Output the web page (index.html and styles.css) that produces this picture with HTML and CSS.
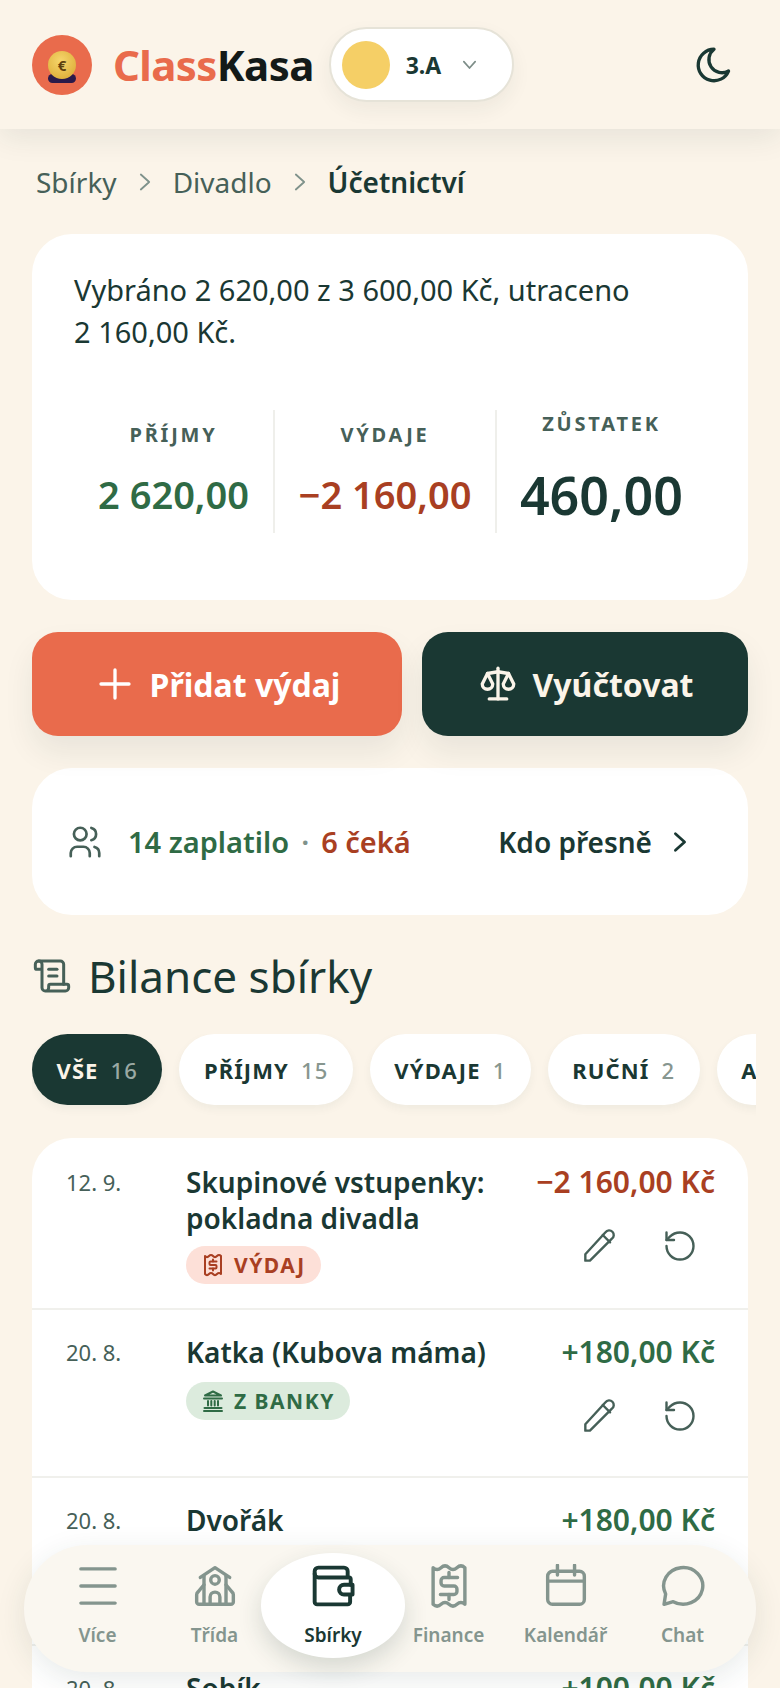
FILE: index.html
```html
<!DOCTYPE html>
<html lang="cs">
<head>
<meta charset="utf-8">
<title>ClassKasa</title>
<link rel="stylesheet" href="styles.css">
</head>
<body>
<svg class="defs" width="0" height="0" aria-hidden="true">
  <symbol id="pencil" viewBox="0 0 24 24"><path d="M4 20h2.500L18.500 8a2.500 2.500 0 1 0-3.500-3.500L4 16.500z"/><path d="M13.500 6l4 4"/></symbol>
  <symbol id="undo" viewBox="0 0 24 24"><path d="M3 12a9 9 0 1 0 9-9 9.750 9.750 0 0 0-6.740 2.740L3 8"/><path d="M3 3v5h5"/></symbol>
  <symbol id="bank" viewBox="0 0 24 24"><path d="M3 22h18"/><path d="M3.500 19h17"/><path d="M3 9.500h18"/><path d="M4 6.500L12 2.500l8 4z"/><path d="M7 12v4.500M10.300 12v4.500M13.700 12v4.500M17 12v4.500"/></symbol>
  <symbol id="receipt" viewBox="0 0 24 24"><path d="M4 3c1.300 1.500 2.700 1.500 4 0s2.700-1.500 4 0 2.700 1.500 4 0 2.700-1.500 4 0v18c-1.300-1.500-2.700-1.500-4 0s-2.700 1.500-4 0-2.700-1.500-4 0-2.700 1.500-4 0z"/><path d="M15.500 8.500h-6a1 1 0 0 0-1 1v1.500a1 1 0 0 0 1 1h5a1 1 0 0 1 1 1v1.500a1 1 0 0 1-1 1h-6"/><path d="M12 6.500v2M12 15.500v2"/></symbol>
</svg>

<header class="topbar">
  <div class="logo">
    <span class="logo-base"></span>
    <span class="logo-coin">€</span>
  </div>
  <div class="brand"><span class="brand-a">Class</span>Kasa</div>
  <div class="class-pill">
    <span class="class-dot"></span>
    <span class="class-name">3.A</span>
    <svg class="class-chev" viewBox="0 0 24 24"><path d="M4 8l8 9 8-9"/></svg>
  </div>
  <button class="moon" aria-label="Tmavý režim">
    <svg viewBox="0 0 24 24"><path d="M12 3a7.500 7.500 0 0 0 8.300 12.450A9 9 0 1 1 12 3z"/></svg>
  </button>
</header>

<main class="page">
  <nav class="crumbs">
    <span>Sbírky</span>
    <svg viewBox="0 0 24 24"><path d="M7 3l10 9-10 9"/></svg>
    <span>Divadlo</span>
    <svg viewBox="0 0 24 24"><path d="M7 3l10 9-10 9"/></svg>
    <strong>Účetnictví</strong>
  </nav>

  <section class="card summary">
    <p class="summary-text">Vybráno 2 620,00 z 3 600,00 Kč, utraceno<br>2 160,00 Kč.</p>
    <div class="stats">
      <div class="stat">
        <div class="stat-label">PŘÍJMY</div>
        <div class="stat-value plus">2 620,00</div>
      </div>
      <div class="stat">
        <div class="stat-label">VÝDAJE</div>
        <div class="stat-value minus">−2 160,00</div>
      </div>
      <div class="stat">
        <div class="stat-label">ZŮSTATEK</div>
        <div class="stat-value big">460,00</div>
      </div>
    </div>
  </section>

  <div class="actions">
    <button class="btn btn-coral">
      <svg viewBox="0 0 24 24"><path d="M12 4v16M4 12h16"/></svg>Přidat výdaj
    </button>
    <button class="btn btn-dark">
      <svg viewBox="0 0 24 24"><path d="M7 20.500h10"/><path d="M6 6l6-1 6 1"/><path d="M12 3v17.500"/><path d="M9 12L6 6l-3 6a3 3 0 0 0 6 0z"/><path d="M21 12l-3-6-3 6a3 3 0 0 0 6 0z"/></svg>Vyúčtovat
    </button>
  </div>

  <section class="card who">
    <svg class="who-icon" viewBox="0 0 24 24"><circle cx="9" cy="7" r="4"/><path d="M3 21v-2a4 4 0 0 1 4-4h4a4 4 0 0 1 4 4v2"/><path d="M16 3.130a4 4 0 0 1 0 7.750"/><path d="M21 21v-2a4 4 0 0 0-3-3.850"/></svg>
    <span class="plus">14 zaplatilo</span>
    <span class="who-dot">·</span>
    <span class="minus">6 čeká</span>
    <span class="who-link">Kdo přesně</span>
    <svg class="who-chev" viewBox="0 0 24 24"><path d="M7 3l10 9-10 9"/></svg>
  </section>

  <h2 class="title">
    <svg viewBox="0 0 24 24"><path d="M15 12h-5"/><path d="M15 8h-5"/><path d="M19 17V5a2 2 0 0 0-2-2H4"/><path d="M8 21h12a2 2 0 0 0 2-2v-1a1 1 0 0 0-1-1H11a1 1 0 0 0-1 1v1a2 2 0 1 1-4 0V5a2 2 0 1 0-4 0v2a1 1 0 0 0 1 1h3"/></svg>
    Bilance sbírky
  </h2>

  <div class="chips">
    <span class="chip chip-on">VŠE <em>16</em></span>
    <span class="chip">PŘÍJMY <em>15</em></span>
    <span class="chip">VÝDAJE <em>1</em></span>
    <span class="chip">RUČNÍ <em>2</em></span>
    <span class="chip">AUTOMATICKÉ <em>13</em></span>
  </div>

  <section class="card list">
    <article class="row row-first">
      <div class="row-date">12. 9.</div>
      <div class="row-main">
        <div class="row-title">Skupinové vstupenky: pokladna divadla</div>
        <span class="badge badge-red"><svg viewBox="0 0 24 24"><use href="#receipt"/></svg>VÝDAJ</span>
      </div>
      <div class="row-side">
        <div class="row-amount minus">−2 160,00 Kč</div>
        <div class="row-tools">
          <svg class="tool-pencil" viewBox="0 0 24 24"><use href="#pencil"/></svg>
          <svg class="tool-undo" viewBox="0 0 24 24"><use href="#undo"/></svg>
        </div>
      </div>
    </article>
    <article class="row">
      <div class="row-date">20. 8.</div>
      <div class="row-main">
        <div class="row-title">Katka (Kubova máma)</div>
        <span class="badge badge-green"><svg viewBox="0 0 24 24"><use href="#bank"/></svg>Z BANKY</span>
      </div>
      <div class="row-side">
        <div class="row-amount plus">+180,00 Kč</div>
        <div class="row-tools">
          <svg class="tool-pencil" viewBox="0 0 24 24"><use href="#pencil"/></svg>
          <svg class="tool-undo" viewBox="0 0 24 24"><use href="#undo"/></svg>
        </div>
      </div>
    </article>
    <article class="row">
      <div class="row-date">20. 8.</div>
      <div class="row-main">
        <div class="row-title">Dvořák</div>
        <span class="badge badge-green"><svg viewBox="0 0 24 24"><use href="#bank"/></svg>Z BANKY</span>
      </div>
      <div class="row-side">
        <div class="row-amount plus">+180,00 Kč</div>
        <div class="row-tools">
          <svg class="tool-pencil" viewBox="0 0 24 24"><use href="#pencil"/></svg>
          <svg class="tool-undo" viewBox="0 0 24 24"><use href="#undo"/></svg>
        </div>
      </div>
    </article>
    <article class="row">
      <div class="row-date">20. 8.</div>
      <div class="row-main">
        <div class="row-title">Sobík</div>
      </div>
      <div class="row-side">
        <div class="row-amount plus">+100,00 Kč</div>
      </div>
    </article>
  </section>
</main>

<nav class="tabbar">
  <div class="tab">
    <svg viewBox="0 0 36 36"><path d="M4 4h28M4 18h28M4 32h28"/></svg>
    <span>Více</span>
  </div>
  <div class="tab">
    <svg viewBox="0 0 36 36"><path d="M6 11L18 3l12 8"/><path d="M9 10v23"/><path d="M27 10v23"/><circle cx="18" cy="13" r="3.500"/><path d="M14 33v-6a4 4 0 0 1 8 0v6"/><path d="M9 17l-5 6a3 3 0 0 0-1 2v6a2 2 0 0 0 2 2h26a2 2 0 0 0 2-2v-6a3 3 0 0 0-1-2l-5-6"/></svg>
    <span>Třída</span>
  </div>
  <div class="tab tab-on">
    <svg viewBox="0 0 36 36"><path d="M30 10V6a3 3 0 0 0-3-3H6a3 3 0 0 0-3 3v25a2 2 0 0 0 2 2h25a2 2 0 0 0 2-2v-5"/><path d="M3 8a3 3 0 0 0 3 3h25a1.500 1.500 0 0 1 1.500 1.500V17"/><path d="M34 17h-7a3.500 3.500 0 0 0 0 8h7z"/></svg>
    <span>Sbírky</span>
  </div>
  <div class="tab">
    <svg viewBox="0 0 36 36"><path d="M5 3c2.170 2 4.330 2 6.500 0s4.330-2 6.500 0 4.330 2 6.500 0 4.330-2 6.500 0v30c-2.170-2-4.330-2-6.500 0s-4.330 2-6.500 0-4.330-2-6.500 0-4.330 2-6.500 0z"/><path d="M25 11H14a2.500 2.500 0 0 0-2.500 2.500v2A2.500 2.500 0 0 0 14 18h8a2.500 2.500 0 0 1 2.500 2.500v2A2.500 2.500 0 0 1 22 25H11"/><path d="M18 7v4M18 25v4"/></svg>
    <span>Finance</span>
  </div>
  <div class="tab">
    <svg viewBox="0 0 36 36"><rect x="3" y="6" width="30" height="27" rx="4"/><path d="M3 14h30"/><path d="M11 1v8M25 1v8"/></svg>
    <span>Kalendář</span>
  </div>
  <div class="tab">
    <svg viewBox="0 0 36 36"><path d="M10 30.800A16 15 0 1 0 3.800 24.500L2.500 33z"/></svg>
    <span>Chat</span>
  </div>
</nav>
</body>
</html>
```

FILE: styles.css
```css
* { box-sizing: border-box; }
html, body { margin: 0; height: 1688px; overflow: hidden; }
body {
  background: #fbf4e9;
  color: #1a3833;
  font-family: "Noto Sans", sans-serif;
  position: relative;
}
svg { fill: none; stroke: currentColor; stroke-linecap: round; stroke-linejoin: round; flex: none; display: block; }
.defs { position: absolute; }
button { font: inherit; border: 0; padding: 0; background: none; color: inherit; }

/* header */
.topbar {
  height: 129px;
  padding: 0 32px;
  display: flex;
  align-items: center;
  background: #fbf4e9;
  box-shadow: 0 8px 28px rgba(26, 56, 51, .09);
  position: relative;
}
.logo {
  width: 60px; height: 60px;
  border-radius: 50%;
  background: #e96b4c;
  position: relative;
  flex: none;
}
.logo-coin {
  position: absolute; left: 16px; top: 16px;
  width: 28px; height: 28px;
  border-radius: 50%;
  background: radial-gradient(circle at 45% 35%, #f6d66c, #d8a52e);
  color: #5d3f0e;
  font-size: 15px; font-weight: 700; line-height: 28px; text-align: center;
}
.logo-base {
  position: absolute; left: 16px; top: 39px;
  width: 28px; height: 9px;
  border-radius: 6px;
  background: #2a1a4a;
}
.brand {
  margin-left: 21px;
  font-size: 42px; font-weight: 700; letter-spacing: -.6px;
  color: #131a18;
}
.brand-a { color: #e96b4c; }
.class-pill {
  margin-left: 15px;
  width: 185px; height: 75px;
  border-radius: 38px;
  border: 2px solid #e6e3d8;
  background: #fff;
  box-shadow: 0 8px 20px rgba(26, 56, 51, .06);
  display: flex; align-items: center;
  padding-left: 11px;
}
.class-dot { width: 48px; height: 48px; border-radius: 50%; background: #f5cf66; }
.class-name { margin-left: 16px; font-size: 23px; font-weight: 700; }
.class-chev { width: 17px; height: 17px; margin-left: 20px; stroke: #7d8d88; stroke-width: 2.400; }
.moon { margin-left: auto; margin-right: -2px; width: 72px; height: 72px; display: flex; align-items: center; justify-content: center; }
.moon svg { width: 42px; height: 42px; stroke-width: 1.900; }

/* page */
.page { padding: 0 32px; }
.crumbs {
  height: 40px; margin-top: 33px;
  padding-left: 4px;
  display: flex; align-items: center;
  font-size: 28px; color: #466058;
}
.crumbs svg { width: 20px; height: 20px; margin: 0 18px 0 18px; stroke: #7f928b; stroke-width: 2.200; }
.crumbs strong { font-weight: 600; color: #1a3833; }

.card { background: #fff; border-radius: 40px; }
.summary { margin-top: 32px; height: 366px; padding: 35px 42px 0; }
.summary-text { margin: 0; font-size: 29px; line-height: 42px; }
.stats {
  margin-top: 57px;
  height: 122px;
  display: grid;
  grid-template-columns: 199px 222px 1fr;
}
.stat {
  display: flex; flex-direction: column; align-items: center; justify-content: center;
  border-left: 2px solid #efefeb;
  padding-bottom: 4px;
}
.stat:first-child { border-left: 0; }
.stat-label { font-size: 20px; line-height: 28px; font-weight: 700; letter-spacing: 2.800px; color: #466058; }
.stat-value { margin-top: 21px; font-size: 38px; line-height: 48px; font-weight: 600; white-space: nowrap; }
.stat-value.big { font-size: 52px; line-height: 68px; margin-top: 23px; }
.plus { color: #2f6b45; }
.minus { color: #a93f22; }

.actions { margin-top: 32px; display: grid; grid-template-columns: 370px 1fr; gap: 20px; }
.btn {
  height: 104px; border-radius: 26px;
  display: flex; align-items: center; justify-content: center; gap: 14px;
  font-size: 32px; font-weight: 700;
  box-shadow: 0 16px 30px rgba(26, 56, 51, .08);
}
.btn svg { width: 42px; height: 42px; stroke-width: 1.900; }
.btn-coral { background: #e96b4c; color: #fff; }
.btn-dark { background: #1a3833; color: #fbf4e9; }

.who {
  margin-top: 32px; height: 147px;
  padding: 0 57px 0 34px;
  display: flex; align-items: center;
  font-size: 29px; font-weight: 600;
}
.who-icon { width: 38px; height: 38px; margin-right: 24px; stroke: #466058; stroke-width: 1.700; }
.who-dot { margin: 0 12px 0 12px; color: #7f928b; }
.who-link { margin-left: auto; color: #1a3833; font-size: 28px; }
.who-chev { width: 22px; height: 22px; margin-left: 17px; stroke-width: 3; }

.title {
  margin: 33px 0 0; height: 56px;
  display: flex; align-items: center; gap: 16px;
  font-size: 44px; font-weight: 400;
}
.title svg { width: 40px; height: 40px; stroke: #466058; stroke-width: 1.800; }

.chips {
  margin: 30px -8px -14px 0;
  display: flex; gap: 17px;
  height: 85px;
  overflow: hidden;
}
.chip {
  height: 71px; padding: 0 24.500px;
  border-radius: 36px;
  background: #fff;
  display: flex; align-items: center; gap: 12px;
  font-size: 22px; font-weight: 700; letter-spacing: 1.100px;
  white-space: nowrap;
  box-shadow: 0 4px 10px rgba(26, 56, 51, .05);
}
.chip em { font-style: normal; font-weight: 500; color: #87968f; }
.chip-on { background: #1a3833; color: #fbf4e9; }
.chip-on em { color: #9aa9a4; }

.list { margin-top: 33px; overflow: hidden; }
.row {
  display: grid;
  grid-template-columns: 120px 1fr auto;
  padding: 24px 33px 24px 34px;
  border-top: 2px solid #f0f0ec;
}
.row-first { border-top: 0; padding-top: 26px; }
.row-first .badge { margin-top: 10px; }
.row-date { font-size: 22px; line-height: 36px; color: #466058; }
.row-main { max-width: 320px; }
.row-title { font-size: 28px; line-height: 36px; font-weight: 600; }
.badge {
  margin-top: 12px;
  height: 38px; padding: 0 15px 0 15px;
  border-radius: 19px;
  display: inline-flex; align-items: center; gap: 9px;
  font-size: 21px; font-weight: 700; letter-spacing: 1.500px;
}
.badge svg { width: 24px; height: 24px; stroke-width: 2; }
.badge-red { background: #fde0d8; color: #a93f22; }
.badge-green { background: #dcebdd; color: #2f6b45; }
.row-side { min-height: 118px; display: flex; flex-direction: column; align-items: flex-end; }
.row-amount { font-size: 30px; line-height: 36px; font-weight: 600; white-space: nowrap; }
.row-tools { margin-top: 24px; display: flex; align-items: center; gap: 40px; color: #466058; padding-right: 17px; }
.tool-pencil { width: 44px; height: 44px; stroke-width: 1.300; }
.tool-undo { width: 36px; height: 36px; stroke-width: 1.600; }

/* bottom navigation */
.tabbar {
  position: absolute; left: 24px; bottom: 16px;
  width: 732px; height: 127px;
  border-radius: 64px;
  background: #faf7f0;
  box-shadow: 0 8px 30px rgba(26, 56, 51, .1);
  padding: 8px 15px 0;
  display: grid;
  grid-template-columns: repeat(6, 117px);
  align-items: start;
}
.tab {
  height: 105px;
  display: flex; flex-direction: column; align-items: center;
  padding-top: 11px;
  color: #84958e;
  font-size: 19px; font-weight: 600;
}
.tab svg { width: 44px; height: 44px; stroke-width: 2.800; }
.tab span { margin-top: 14px; line-height: 26px; }
.tab-on {
  width: 144px; margin-left: -12px;
  border-radius: 72px / 52px;
  background: #fff;
  color: #1a3833;
  box-shadow: 0 10px 24px rgba(26, 56, 51, .16);
}
.tab-on svg { stroke-width: 3.200; }
```
